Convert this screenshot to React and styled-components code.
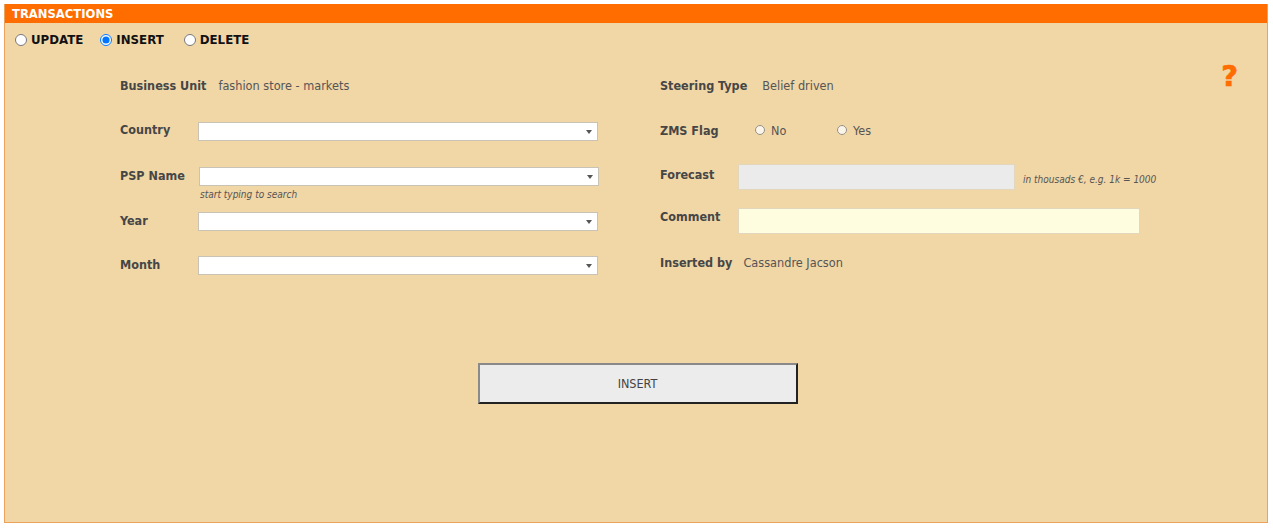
import React from "react";
import styled, { createGlobalStyle } from "styled-components";

const Global = createGlobalStyle`
  body{
    margin:0;
    background:#ffffff;
    font-family:"DejaVu Sans Condensed","DejaVu Sans",sans-serif;
  }
`
const Panel = styled.div`
  margin:4px 5px 0 4px;
  height:518px;
  display:flex;
  flex-direction:column;
  background:#f1d6a6;
  border:1px solid #eba35c;
  border-top:none;
`
const Header = styled.div`
  height:19px;
  background:#ff6c00;
  color:#ffffff;
  font-family:"DejaVu Sans",sans-serif;
  font-weight:bold;
  font-size:11.6px;
  line-height:20px;
  padding-left:7px;
`
const Body = styled.div`
  flex:1;
  display:flex;
  flex-direction:column;
  padding:5px 0 0 10px;
`
const Modes = styled.div`
  display:flex;
  align-items:center;
  height:24px;
  gap:17px;
`
const Mode = styled.label`
  display:flex;
  align-items:center;
  margin-left:${(p)=>p.$ml || 0}px;
  font-family:"DejaVu Sans",sans-serif;
  font-weight:bold;
  font-size:11.8px;
  color:#111;
  & input{
    margin:0 4px 0 0;
    width:12px;
    height:12px;
  }
`
const Form = styled.div`
  display:grid;
  grid-template-columns:540px 1fr 60px;
  margin:23px 0 0 105px;
`
const Column = styled.div`
  display:flex;
  flex-direction:column;
`
const Row = styled.div`
  display:flex;
  align-items:${(p)=>p.$align || "flex-start"};
  height:${(p)=>p.$h}px;
  margin-bottom:${(p)=>p.$mb || 0}px;
`
const Label = styled.div`
  font-weight:bold;
  font-size:12.5px;
  color:#464646;
  width:${(p)=>p.$w ? p.$w + "px" : "auto"};
  padding-top:${(p)=>p.$pt || 0}px;
  flex-shrink:0;
`
const Value = styled.div`
  font-size:12.6px;
  color:#555;
  margin-left:${(p)=>p.$ml || 0}px;
`
const Field = styled.div`
  display:flex;
  flex-direction:column;
`
const Combo = styled.div`
  width:393px;
  height:17px;
  background:#fff;
  border:1px solid #c9c3b6;
  display:flex;
  justify-content:flex-end;
  align-items:center;
  padding-right:5px;
  box-sizing:content-box;
  &::after{
    content:"";
    border-left:3px solid transparent;
    border-right:3px solid transparent;
    border-top:4px solid #555;
  }
`
const Hint = styled.div`
  font-size:10px;
  font-style:italic;
  color:#555;
  margin:${(p)=>p.$m || "0"};
`
const TextBox = styled.div`
  width:${(p)=>p.$w}px;
  height:24px;
  background:${(p)=>p.$bg};
  border:1px solid #e2d6bd;
`
const Flag = styled.label`
  display:flex;
  align-items:center;
  font-size:12.5px;
  color:#555;
  width:${(p)=>p.$w}px;
  & input{
    margin:0 6px 0 0;
    width:10px;
    height:10px;
    opacity:0.75;
  }
`
const Help = styled.div`
  margin-top:-16px;
  padding-right:29px;
  text-align:right;
  font-family:"DejaVu Sans",sans-serif;
  font-weight:900;
  font-size:29px;
  color:#ff6c00;
  -webkit-text-stroke:0.6px #ff6c00;
`
const ButtonRow = styled.div`
  display:flex;
  justify-content:center;
  margin:88px 7px 0 0;
`
const Button = styled.button`
  width:320px;
  height:41px;
  background:#ececec;
  border:2px solid;
  border-color:#8a8a8a #222 #222 #8a8a8a;
  font-family:"DejaVu Sans Condensed","DejaVu Sans",sans-serif;
  font-size:12.5px;
  color:#444;
`

function App(){
  return(
    <>
      <Global/>
      <Panel>
        <Header>TRANSACTIONS</Header>
        <Body>
          <Modes>
            <Mode><input type="radio" name="mode" readOnly/>UPDATE</Mode>
            <Mode><input type="radio" name="mode" defaultChecked/>INSERT</Mode>
            <Mode $ml={3}><input type="radio" name="mode" readOnly/>DELETE</Mode>
          </Modes>
          <Form>
            <Column>
              <Row $h={20} $mb={27} $align="center">
                <Label>Business Unit</Label>
                <Value $ml={12}>fashion store - markets</Value>
              </Row>
              <Row $h={45}>
                <Label $w={78}>Country</Label>
                <Combo/>
              </Row>
              <Row $h={45}>
                <Label $w={79} $pt={1}>PSP Name</Label>
                <Field>
                  <Combo/>
                  <Hint $m="3px 0 0 1px">start typing to search</Hint>
                </Field>
              </Row>
              <Row $h={44}>
                <Label $w={78} $pt={1}>Year</Label>
                <Combo/>
              </Row>
              <Row $h={19}>
                <Label $w={78} $pt={1}>Month</Label>
                <Combo/>
              </Row>
            </Column>
            <Column>
              <Row $h={45}>
                <Row $h={20} $align="center">
                  <Label>Steering Type</Label>
                  <Value $ml={15}>Belief driven</Value>
                </Row>
              </Row>
              <Row $h={44}>
                <Row $h={20} $align="center">
                  <Label $w={95}>ZMS Flag</Label>
                  <Flag $w={82}><input type="radio" name="zms" readOnly/>No</Flag>
                  <Flag $w={60}><input type="radio" name="zms" readOnly/>Yes</Flag>
                </Row>
              </Row>
              <Row $h={44}>
                <Label $w={78} $pt={3}>Forecast</Label>
                <TextBox $w={275} $bg="#ebebeb"/>
                <Hint $m="10px 0 0 8px">in thousads €, e.g. 1k = 1000</Hint>
              </Row>
              <Row $h={44}>
                <Label $w={78} $pt={1}>Comment</Label>
                <TextBox $w={400} $bg="#fffde0"/>
              </Row>
              <Row $h={20} $align="center">
                <Label>Inserted by</Label>
                <Value $ml={11}>Cassandre Jacson</Value>
              </Row>
            </Column>
            <Help>?</Help>
          </Form>
          <ButtonRow>
            <Button>INSERT</Button>
          </ButtonRow>
        </Body>
      </Panel>
    </>
  );
}
export default App;
